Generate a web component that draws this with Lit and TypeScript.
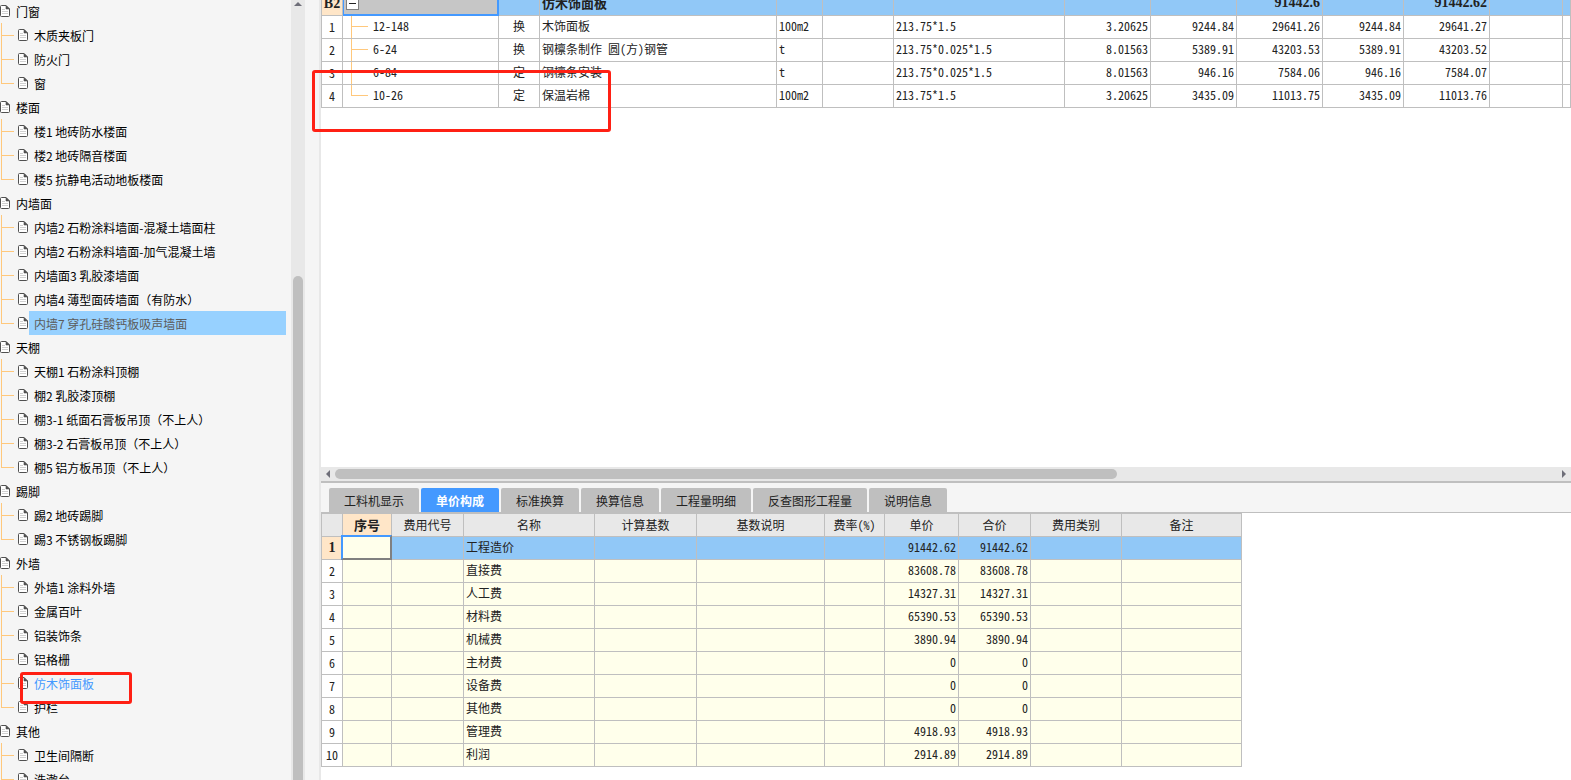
import { LitElement, html, css, nothing } from "lit";
import { customElement, property, state } from "lit/decorators.js";
import { classMap } from "lit/directives/class-map.js";

interface TreeGroup {
  name: string;
  items: string[];
}

const GROUPS: TreeGroup[] = [
  { name: "门窗", items: ["木质夹板门", "防火门", "窗"] },
  { name: "楼面", items: ["楼1 地砖防水楼面", "楼2 地砖隔音楼面", "楼5 抗静电活动地板楼面"] },
  {
    name: "内墙面",
    items: [
      "内墙2 石粉涂料墙面-混凝土墙面柱",
      "内墙2 石粉涂料墙面-加气混凝土墙",
      "内墙面3 乳胶漆墙面",
      "内墙4 薄型面砖墙面（有防水）",
      "内墙7 穿孔硅酸钙板吸声墙面",
    ],
  },
  {
    name: "天棚",
    items: [
      "天棚1 石粉涂料顶棚",
      "棚2 乳胶漆顶棚",
      "棚3-1 纸面石膏板吊顶（不上人）",
      "棚3-2 石膏板吊顶（不上人）",
      "棚5 铝方板吊顶（不上人）",
    ],
  },
  { name: "踢脚", items: ["踢2 地砖踢脚", "踢3 不锈钢板踢脚"] },
  { name: "外墙", items: ["外墙1 涂料外墙", "金属百叶", "铝装饰条", "铝格栅", "仿木饰面板", "护栏"] },
  { name: "其他", items: ["卫生间隔断", "洗漱台"] },
];

const SELECTED = "内墙7 穿孔硅酸钙板吸声墙面";
const ACTIVE = "仿木饰面板";

const ITEM_COLUMNS = [22, 156, 41, 237, 46, 71, 171, 86, 86, 86, 81, 86, 73];

interface ItemRow {
  code: string;
  kind: string;
  name: string;
  unit: string;
  formula: string;
  values: string[];
}

const ITEM_ROWS: ItemRow[] = [
  { code: "12-148", kind: "换", name: "木饰面板", unit: "100m2", formula: "213.75*1.5", values: ["3.20625", "9244.84", "29641.26", "9244.84", "29641.27"] },
  { code: "6-24", kind: "换", name: "钢檩条制作 圆(方)钢管", unit: "t", formula: "213.75*0.025*1.5", values: ["8.01563", "5389.91", "43203.53", "5389.91", "43203.52"] },
  { code: "6-84", kind: "定", name: "钢檩条安装", unit: "t", formula: "213.75*0.025*1.5", values: ["8.01563", "946.16", "7584.06", "946.16", "7584.07"] },
  { code: "10-26", kind: "定", name: "保温岩棉", unit: "100m2", formula: "213.75*1.5", values: ["3.20625", "3435.09", "11013.75", "3435.09", "11013.76"] },
];

const TABS = ["工料机显示", "单价构成", "标准换算", "换算信息", "工程量明细", "反查图形工程量", "说明信息"];

const FEE_COLUMNS: [string, number][] = [
  ["", 22],
  ["序号", 49],
  ["费用代号", 72],
  ["名称", 131],
  ["计算基数", 102],
  ["基数说明", 128],
  ["费率(%)", 60],
  ["单价", 74],
  ["合价", 72],
  ["费用类别", 91],
  ["备注", 120],
];

const FEES: [string, string][] = [
  ["工程造价", "91442.62"],
  ["直接费", "83608.78"],
  ["人工费", "14327.31"],
  ["材料费", "65390.53"],
  ["机械费", "3890.94"],
  ["主材费", "0"],
  ["设备费", "0"],
  ["其他费", "0"],
  ["管理费", "4918.93"],
  ["利润", "2914.89"],
];

const gridStyles = css`
  table {
    border-collapse: separate;
    border-spacing: 0;
    table-layout: fixed;
    font-family: "Noto Sans CJK SC", sans-serif;
    font-feature-settings: "hwid";
    font-size: 12px;
    line-height: 20px;
    color: #222;
  }
  td,
  th {
    box-sizing: border-box;
    height: 23px;
    padding: 0 2px 2px;
    border-right: 1px solid #bfbfbf;
    border-bottom: 1px solid #bfbfbf;
    font-weight: 400;
    text-align: left;
    white-space: nowrap;
    overflow: hidden;
  }
  tr > :first-child {
    padding: 0;
    border-left: 1px solid #bfbfbf;
    text-align: center;
  }
  .num {
    text-align: right;
  }
  .mid {
    text-align: center;
  }
  .strong {
    font-family: "Liberation Serif", "Noto Sans CJK SC", serif;
    font-size: 14px;
    font-weight: 700;
  }
  .current {
    background: #91c8f7;
  }
  .current > .marker,
  .marker {
    background: #ffe6c8;
  }
`;

@customElement("work-tree")
export class WorkTree extends LitElement {
  static styles = css`
    :host {
      display: flex;
      height: 100vh;
      background: #f5f5f5;
      font-family: "Noto Sans CJK SC", sans-serif;
      font-size: 12px;
    }
    .list {
      flex: 1;
      min-width: 0;
      overflow: hidden;
    }
    ul {
      margin: 0;
      padding: 0;
      list-style: none;
    }
    .groups {
      margin-top: -1px;
    }
    .row {
      display: flex;
      align-items: center;
      height: 24px;
    }
    .icon {
      flex: none;
      display: block;
    }
    a {
      color: #000;
      text-decoration: none;
      white-space: nowrap;
      line-height: 22px;
      padding-top: 2px;
      word-spacing: normal;
    }
    .group a {
      padding-left: 6px;
    }
    .item {
      position: relative;
      padding-left: 1px;
    }
    .item a {
      flex: 1;
      margin-left: 1px;
      margin-right: 5px;
      padding-left: 5px;
    }
    .branch {
      flex: none;
      box-sizing: border-box;
      width: 17px;
      height: 24px;
      border-left: 1px solid #ffc87c;
      background: linear-gradient(#ffc87c, #ffc87c) 0 12px / 12px 1px no-repeat;
    }
    li:last-child > .item > .branch {
      border-left: 0;
      background:
        linear-gradient(#ffc87c, #ffc87c) 0 12px / 13px 1px no-repeat,
        linear-gradient(#ffc87c, #ffc87c) 0 0 / 1px 12px no-repeat;
    }
    a.selected {
      background: #97d1ff;
      color: #5c5c5c;
    }
    a.active {
      color: #4499ff;
    }
    .callout {
      position: absolute;
      z-index: 1;
      left: 20px;
      top: 1px;
      box-sizing: border-box;
      width: 112px;
      height: 32px;
      border: 3px solid #ff2014;
      border-radius: 3px;
      pointer-events: none;
    }
    .scroll {
      flex: none;
      display: flex;
      flex-direction: column;
      align-items: center;
      width: 14px;
      background: #e8e8e8;
    }
    .up {
      display: block;
      margin-top: 2px;
    }
    .thumb {
      width: 10px;
      margin-top: 270px;
      flex: 1;
      border-radius: 5px 5px 0 0;
      background: #bfbfbf;
    }
  `;

  private icon() {
    return html`<svg class="icon" width="10" height="12" viewBox="0 0 10 12" aria-hidden="true">
      <path d="M1.5 .5H6L9.500 4v6.500a1 1 0 0 1-1 1h-7a1 1 0 0 1-1-1v-9a1 1 0 0 1 1-1z" fill="#fff" stroke="#505050" />
      <path d="M6 .5V4h3.500z" fill="#505050" stroke="#505050" stroke-width=".6" />
      <path d="M2 4.500h3M2 6.500h6M2 8.500h6" stroke="#d0d0d0" />
    </svg>`;
  }

  private item(name: string) {
    return html`<li>
      <div class="row item">
        <span class="branch"></span>
        ${this.icon()}
        <a href="#" class=${classMap({ selected: name === SELECTED, active: name === ACTIVE })}>${name}</a>
        ${name === ACTIVE ? html`<span class="callout"></span>` : nothing}
      </div>
    </li>`;
  }

  render() {
    return html`
      <nav class="list">
        <ul class="groups">
          ${GROUPS.map(
            (g) => html`<li>
              <div class="row group">${this.icon()}<a href="#">${g.name}</a></div>
              <ul>
                ${g.items.map((name) => this.item(name))}
              </ul>
            </li>`,
          )}
        </ul>
      </nav>
      <div class="scroll">
        <svg class="up" width="8" height="4" viewBox="0 0 8 4"><path d="M0 4L4 0l4 4z" fill="#6e6e78" /></svg>
        <div class="thumb"></div>
      </div>
    `;
  }
}

@customElement("item-grid")
export class ItemGrid extends LitElement {
  static styles = [
    gridStyles,
    css`
      :host {
        display: block;
        overflow: hidden;
        background: #fff;
      }
      table {
        width: 100%;
        margin-top: -7px;
      }
      .current > .name {
        font-size: 13px;
        font-weight: 700;
      }
      .current > .focus {
        padding: 0 3px 1px;
        border-color: #4499ff;
        background: #c6c6c6;
        box-shadow: inset 1px -1px #4499ff, inset -1px 0 #4499ff;
      }
      .toggle {
        display: block;
        box-sizing: border-box;
        width: 13px;
        height: 13px;
        padding: 0;
        border: 1px solid #808080;
        background: #fff;
      }
      .toggle svg {
        display: block;
      }
      .code {
        padding: 0 0 0 8px;
      }
      .line {
        display: flex;
        gap: 5px;
        height: 22px;
      }
      .branch {
        box-sizing: border-box;
        width: 17px;
        height: 22px;
        border-left: 1px solid #ffc87c;
        background: linear-gradient(#ffc87c, #ffc87c) 0 10px / 16px 1px no-repeat;
      }
      tr:last-child .branch {
        border-left: 0;
        background:
          linear-gradient(#ffc87c, #ffc87c) 0 10px / 17px 1px no-repeat,
          linear-gradient(#ffc87c, #ffc87c) 0 0 / 1px 10px no-repeat;
      }
    `,
  ];

  render() {
    return html`<table>
      <colgroup>
        ${ITEM_COLUMNS.map((w) => html`<col style="width:${w}px" />`)}
        <col />
      </colgroup>
      <tbody>
        <tr class="current">
          <th class="marker strong" scope="row">B2</th>
          <td class="focus">
            <button class="toggle" aria-label="折叠">
              <svg width="11" height="11" viewBox="0 0 11 11"><path d="M2 5.5h7" stroke="#222" /></svg>
            </button>
          </td>
          <td></td>
          <td class="name">仿木饰面板</td>
          <td></td>
          <td></td>
          <td></td>
          <td></td>
          <td></td>
          <td class="num strong">91442.6</td>
          <td></td>
          <td class="num strong">91442.62</td>
          <td></td>
          <td></td>
        </tr>
        ${ITEM_ROWS.map(
          (r, i) => html`<tr>
            <th scope="row">${i + 1}</th>
            <td class="code"><div class="line"><span class="branch"></span>${r.code}</div></td>
            <td class="mid">${r.kind}</td>
            <td>${r.name}</td>
            <td>${r.unit}</td>
            <td></td>
            <td>${r.formula}</td>
            ${r.values.map((v) => html`<td class="num">${v}</td>`)}
            <td></td>
            <td></td>
          </tr>`,
        )}
      </tbody>
    </table>`;
  }
}

@customElement("fee-grid")
export class FeeGrid extends LitElement {
  static styles = [
    gridStyles,
    css`
      :host {
        display: block;
        background: #fff;
        padding-bottom: 13px;
      }
      table {
        width: 921px;
        border-top: 1px solid #bfbfbf;
      }
      thead th {
        padding-bottom: 0;
        background: #e8e8e8;
        text-align: center;
      }
      thead .marker {
        background: #ffe6c8;
        font-size: 13px;
        font-weight: 700;
      }
      tbody tr {
        background: #ffffeb;
      }
      tbody .current {
        background: #91c8f7;
      }
      tbody th {
        background: #fff;
      }
      .focus {
        position: relative;
        overflow: visible;
        background: #ffffeb;
      }
      .focus::after {
        content: "";
        position: absolute;
        inset: -2px -1px -1px -2px;
        border: 2px solid;
        border-color: #4499ff #808080 #808080 #4499ff;
      }
    `,
  ];

  render() {
    return html`<table>
      <colgroup>
        ${FEE_COLUMNS.map(([, w]) => html`<col style="width:${w}px" />`)}
      </colgroup>
      <thead>
        <tr>
          ${FEE_COLUMNS.map(([name], i) => html`<th scope="col" class=${classMap({ marker: i === 1 })}>${name}</th>`)}
        </tr>
      </thead>
      <tbody>
        ${FEES.map(
          ([name, value], i) => html`<tr class=${classMap({ current: i === 0 })}>
            <th scope="row" class=${classMap({ marker: i === 0, strong: i === 0 })}>${i + 1}</th>
            <td class=${classMap({ focus: i === 0 })}></td>
            <td></td>
            <td>${name}</td>
            <td></td>
            <td></td>
            <td></td>
            <td class="num">${value}</td>
            <td class="num">${value}</td>
            <td></td>
            <td></td>
          </tr>`,
        )}
      </tbody>
    </table>`;
  }
}

@customElement("tab-strip")
export class TabStrip extends LitElement {
  @property({ attribute: false }) tabs: string[] = [];
  @state() private current = 1;

  static styles = css`
    :host {
      display: flex;
      gap: 2px;
      padding: 5px 8px 0;
      border-top: 2px solid #bfbfbf;
      border-bottom: 1px solid #bfbfbf;
      background: #f5f5f5;
    }
    button {
      height: 24px;
      padding: 1px 15px 0;
      border: 0;
      border-radius: 2px 2px 0 0;
      background: #bfbfbf;
      color: #222;
      font-family: "Noto Sans CJK SC", sans-serif;
      font-size: 12px;
      line-height: 20px;
      white-space: nowrap;
    }
    button.on {
      background: #4499ff;
      color: #fff;
      font-weight: 700;
    }
  `;

  render() {
    return this.tabs.map(
      (t, i) =>
        html`<button role="tab" class=${classMap({ on: i === this.current })} @click=${() => (this.current = i)}>${t}</button>`,
    );
  }
}

@customElement("app-root")
export class AppRoot extends LitElement {
  static styles = css`
    :host {
      display: flex;
      height: 100vh;
      overflow: hidden;
      background: #f5f5f5;
    }
    work-tree {
      flex: none;
      width: 305px;
    }
    main {
      position: relative;
      flex: 1;
      min-width: 0;
      display: flex;
      flex-direction: column;
      margin-left: 14px;
      border-left: 2px solid #e8e8e8;
    }
    item-grid {
      flex: 1;
      min-height: 0;
    }
    .callout {
      position: absolute;
      left: -9px;
      top: 70px;
      box-sizing: border-box;
      width: 299px;
      height: 62px;
      border: 3px solid #ff2014;
      border-radius: 3px;
      pointer-events: none;
    }
    .scroll {
      flex: none;
      display: flex;
      align-items: center;
      justify-content: space-between;
      gap: 5px;
      height: 14px;
      padding: 0 5px;
      background: #e8e8e8;
    }
    .track {
      flex: 1;
    }
    .thumb {
      width: 64%;
      height: 10px;
      border-radius: 5px;
      background: #bfbfbf;
    }
  `;

  render() {
    return html`
      <work-tree></work-tree>
      <main>
        <item-grid></item-grid>
        <div class="scroll">
          <svg width="4" height="8" viewBox="0 0 4 8"><path d="M4 0L0 4l4 4z" fill="#6e6e78" /></svg>
          <div class="track"><div class="thumb"></div></div>
          <svg width="4" height="8" viewBox="0 0 4 8"><path d="M0 0l4 4-4 4z" fill="#6e6e78" /></svg>
        </div>
        <tab-strip .tabs=${TABS}></tab-strip>
        <fee-grid></fee-grid>
        <span class="callout"></span>
      </main>
    `;
  }
}
